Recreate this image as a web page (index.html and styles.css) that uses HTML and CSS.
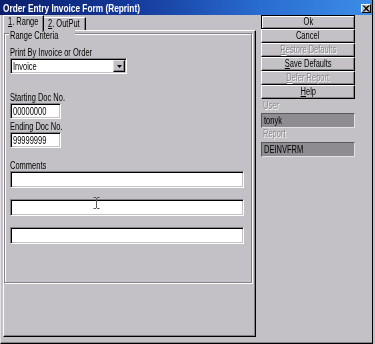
FILE: index.html
```html
<!DOCTYPE html>
<html>
<head>
<meta charset="utf-8">
<link rel="stylesheet" href="styles.css">
</head>
<body>
<div class="win">
  <div class="title">
    <span class="tt">Order Entry Invoice Form (Reprint)</span>
    <span class="close"><svg width="8" height="7" viewBox="0 0 8 7"><path d="M1 0.5L6.5 6.5M2 0.5L7.5 6.5M6.5 0.5L1 6.5M7.5 0.5L2 6.5" stroke="#000" stroke-width="1" fill="none"/></svg></span>
  </div>
  <div class="client">
    <div class="left">
      <div class="tabs">
        <div class="tab active"><span class="t"><u>1</u>. Range</span></div>
        <div class="tab"><span class="t"><u>2</u>. OutPut</span></div>
      </div>
      <div class="panel">
        <div class="group">
          <div class="legend"><span class="t">Range Criteria</span></div>
          <div class="lbl"><span class="t">Print By Invoice or Order</span></div>
          <div class="select sunk">
            <span class="val"><span class="t">Invoice</span></span>
            <span class="drop"><svg width="5" height="3" viewBox="0 0 5 3"><path d="M0 0H5L2.5 3Z" fill="#000"/></svg></span>
          </div>
          <div class="lbl gap18"><span class="t">Starting Doc No.</span></div>
          <div class="doc sunk"><span class="t">00000000</span></div>
          <div class="lbl gap2"><span class="t">Ending Doc No.</span></div>
          <div class="doc sunk"><span class="t">99999999</span></div>
          <div class="lbl gap12"><span class="t">Comments</span></div>
          <div class="comment sunk"></div>
          <div class="comment sunk next"></div>
          <div class="comment sunk next"></div>
        </div>
      </div>
    </div>
    <div class="right">
      <div class="btn default"><span class="t">Ok</span></div>
      <div class="btn"><span class="t">Cancel</span></div>
      <div class="btn disabled"><span class="t"><u>R</u>estore Defaults</span></div>
      <div class="btn"><span class="t"><u>S</u>ave Defaults</span></div>
      <div class="btn disabled"><span class="t"><u>D</u>efer Report</span></div>
      <div class="btn"><span class="t"><u>H</u>elp</span></div>
      <div class="rlbl first"><span class="t">User</span></div>
      <div class="ro"><span class="t">tonyk</span></div>
      <div class="rlbl"><span class="t">Report</span></div>
      <div class="ro second"><span class="t">DEINVFRM</span></div>
    </div>
  </div>
  <svg class="ibeam" width="7" height="12" viewBox="0 0 7 12"><path d="M0.5 0.5H3M4 0.5H6.5M3.5 1V11M0.5 11.5H3M4 11.5H6.5" stroke="#58565a" stroke-width="1" fill="none"/></svg>
</div>
</body>
</html>
```
FILE: styles.css
```css
* { box-sizing: border-box; }
html, body { margin: 0; padding: 0; }
body {
  width: 375px;
  height: 344px;
  overflow: hidden;
  background: #c3c1c5;
  font-family: "Liberation Sans", Arial, sans-serif;
  font-size: 10px;
  color: #000;
}
.t {
  display: inline-block;
  white-space: nowrap;
  transform: scaleX(0.75);
  transform-origin: 0 50%;
}
u { text-decoration: underline; }
.win {
  position: relative;
  width: 373px;
  height: 344px;
  border-right: 1px solid #000;
  display: flex;
  flex-direction: column;
}
.title {
  height: 15px;
  flex: none;
  display: flex;
  justify-content: space-between;
  align-items: flex-start;
  padding: 2px 1px 0 3px;
  background: linear-gradient(90deg, #0a1e6c 0%, #14399a 35%, #2a6cd0 70%, #3c8ee8 100%);
  color: #fff;
  font-weight: bold;
  line-height: 14px;
}
.tt {
  display: inline-block;
  white-space: nowrap;
  transform: scaleX(0.83);
  transform-origin: 0 50%;
}
.close {
  margin-top: 2px;
  width: 10px;
  height: 9px;
  background: #c3c1c5;
  border: 1px solid;
  border-color: #fff #000 #000 #fff;
  display: flex;
  align-items: center;
  justify-content: center;
}
.client {
  flex: 1;
  display: flex;
  gap: 5px;
  padding-left: 2px;
  border-left: 1px solid #e2e0e4;
  border-bottom: 1px solid #000;
  box-shadow: inset 0 -1px 0 #848286;
}
.left {
  width: 253px;
  display: flex;
  flex-direction: column;
}
.tabs {
  height: 15px;
  display: flex;
  align-items: flex-end;
}
.tab {
  height: 13px;
  width: 42px;
  padding-left: 4px;
  line-height: 12px;
  border-top: 1px solid #fff;
  border-right: 1px solid #000;
  box-shadow: inset -1px 0 0 #848286;
}
.tab.active {
  position: relative;
  z-index: 1;
  width: 41px;
  height: 16px;
  margin-bottom: -1px;
  padding-left: 4px;
  border-left: 1px solid #fff;
  background: #c3c1c5;
}
.panel {
  height: 307px;
  padding-top: 2px;
  border-top: 1px solid #fff;
  border-left: 1px solid #fff;
  border-right: 1px solid #000;
  border-bottom: 1px solid #000;
  box-shadow: inset -1px -1px 0 #848286;
}
.group {
  position: relative;
  width: 248px;
  height: 250px;
  padding: 13px 0 0 5px;
  border: 1px solid #848286;
  box-shadow: inset 1px 1px 0 #fff, 1px 1px 0 #fff;
}
.legend {
  position: absolute;
  left: 4px;
  top: -4px;
  padding: 0 1px;
  line-height: 11px;
  background: #c3c1c5;
}
.lbl {
  height: 11px;
  line-height: 11px;
}
.gap18 { margin-top: 18px; }
.gap2 { margin-top: 2px; }
.gap12 { margin-top: 12px; }
.sunk {
  background: #fff;
  border: 1px solid;
  border-color: #848286 #fff #fff #848286;
  box-shadow: inset 1px 1px 0 #000, inset -1px -1px 0 #c3c1c5;
}
.select {
  width: 117px;
  height: 16px;
  display: flex;
  justify-content: space-between;
  padding: 1px;
}
.val {
  padding: 1px 0 0 1px;
  line-height: 12px;
}
.drop {
  width: 12px;
  height: 12px;
  background: #c3c1c5;
  border: 1px solid;
  border-color: #e2e0e4 #000 #000 #e2e0e4;
  box-shadow: inset -1px -1px 0 #848286;
  display: flex;
  align-items: center;
  justify-content: center;
}
.doc {
  width: 51px;
  height: 16px;
  padding: 2px 0 0 2px;
  line-height: 12px;
}
.comment {
  width: 234px;
  height: 17px;
}
.comment.next { margin-top: 11px; }
.right {
  width: 94px;
  display: flex;
  flex-direction: column;
}
.btn {
  height: 14px;
  line-height: 12px;
  text-align: center;
  border: 1px solid;
  border-color: #fff #000 #000 #fff;
  box-shadow: inset -1px -1px 0 #848286;
}
.btn .t { transform-origin: 50% 50%; }
.btn.default {
  border-color: #000;
  box-shadow: inset 1px 1px 0 #fff, inset -1px -1px 0 #848286;
}
.disabled, .rlbl {
  color: #8a888c;
  text-shadow: 1px 1px 0 #fff;
}
.rlbl {
  height: 11px;
  line-height: 11px;
  padding-left: 2px;
}
.rlbl.first { margin-top: 1px; }
.ro {
  margin-top: 2px;
  height: 15px;
  padding: 1px 0 0 2px;
  line-height: 12px;
  background: #8e8c90;
  border: 1px solid;
  border-color: #5a585c #e2e0e4 #e2e0e4 #5a585c;
}
.ro.second { margin-top: 3px; }
.ibeam {
  position: absolute;
  left: 93px;
  top: 197px;
}
```
